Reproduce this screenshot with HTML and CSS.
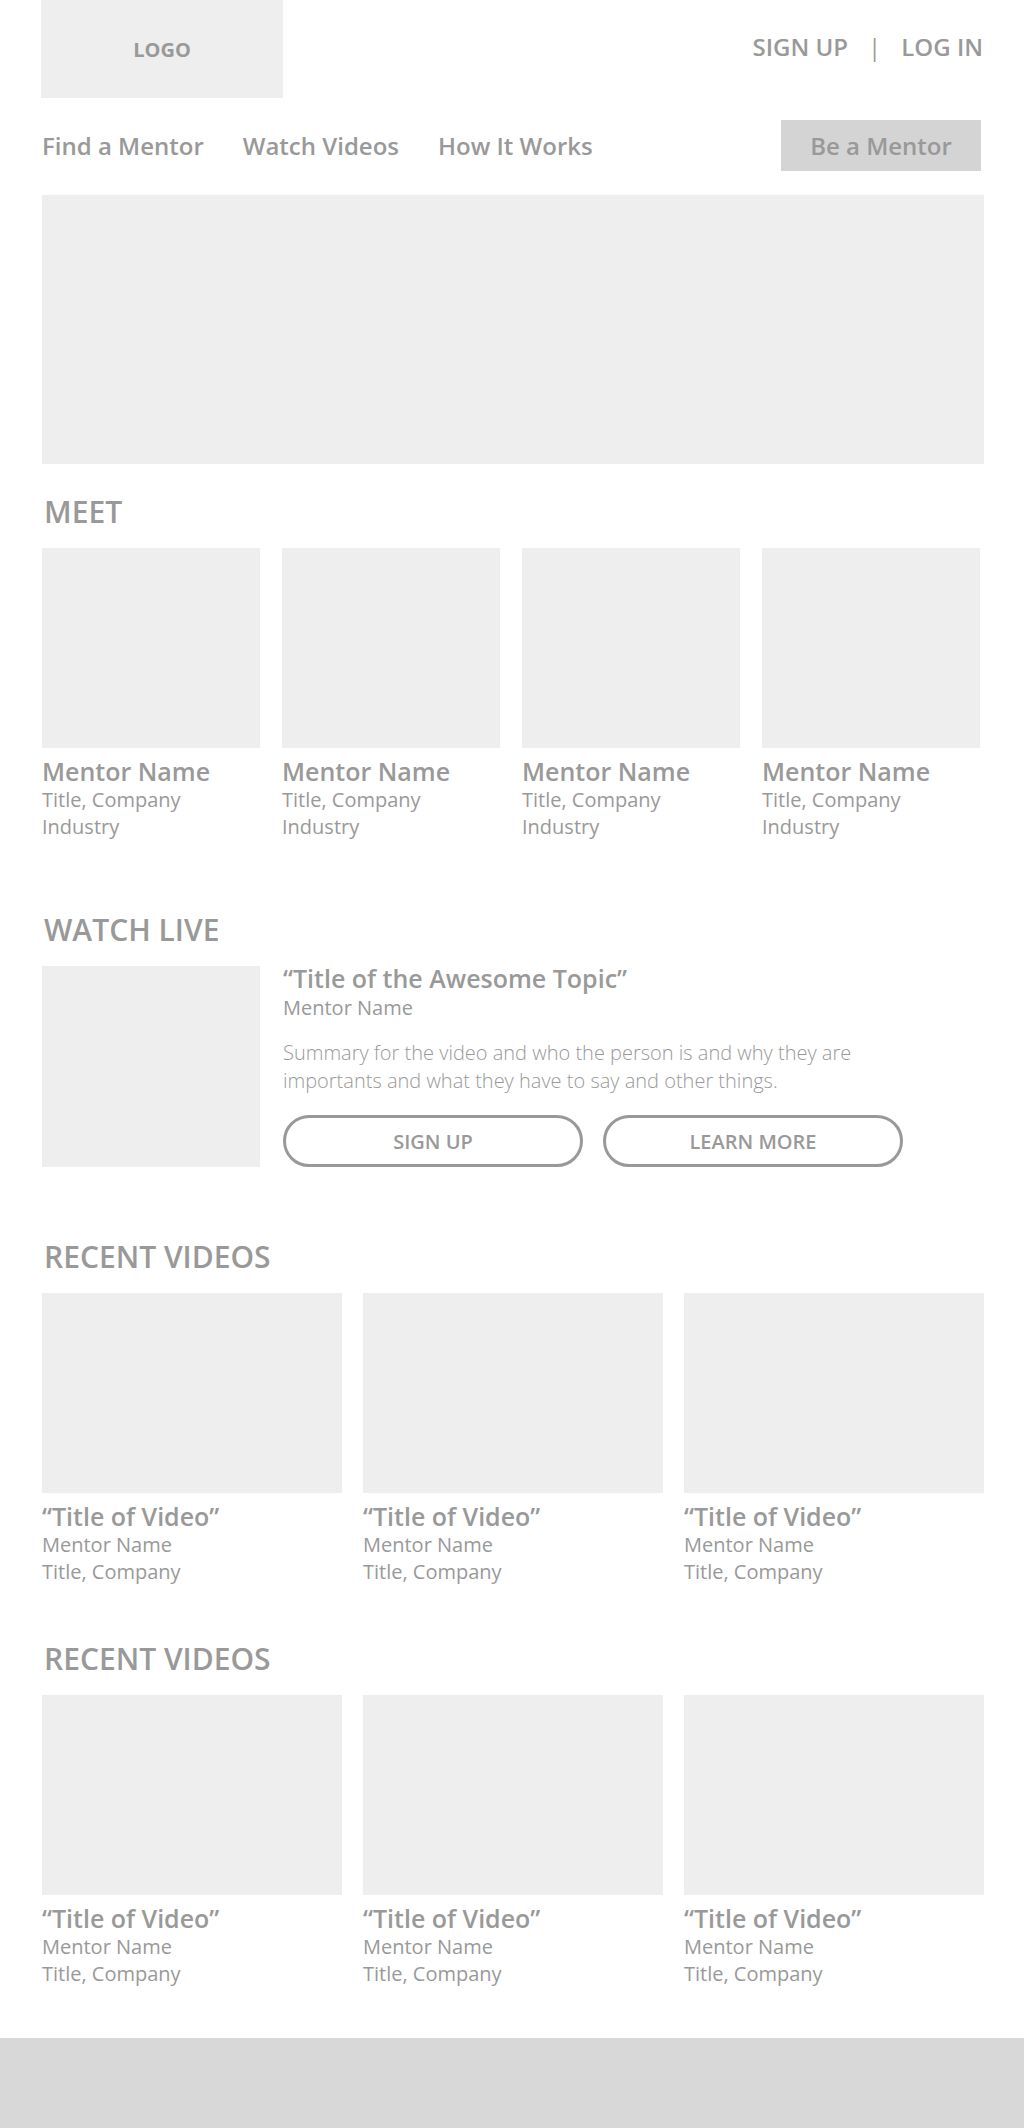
FILE: index.html
```html
<!DOCTYPE html>
<html lang="en">
<head>
<meta charset="utf-8">
<title>Mentor</title>
<link rel="stylesheet" href="styles.css">
</head>
<body>
<div class="page">
  <header class="top">
    <div class="logo">LOGO</div>
    <div class="auth">
      <a href="#">SIGN UP</a>
      <span class="pipe">|</span>
      <a href="#">LOG IN</a>
    </div>
  </header>

  <nav class="nav">
    <div class="links">
      <a href="#">Find a Mentor</a>
      <a href="#">Watch Videos</a>
      <a href="#">How It Works</a>
    </div>
    <a class="cta" href="#">Be a Mentor</a>
  </nav>

  <div class="hero"></div>

  <h2 class="section-title first">MEET</h2>
  <div class="mentors">
    <div class="card">
      <div class="media"></div>
      <div class="card-title">Mentor Name</div>
      <div class="card-sub">Title, Company</div>
      <div class="card-sub">Industry</div>
    </div>
    <div class="card">
      <div class="media"></div>
      <div class="card-title">Mentor Name</div>
      <div class="card-sub">Title, Company</div>
      <div class="card-sub">Industry</div>
    </div>
    <div class="card">
      <div class="media"></div>
      <div class="card-title">Mentor Name</div>
      <div class="card-sub">Title, Company</div>
      <div class="card-sub">Industry</div>
    </div>
    <div class="card">
      <div class="media"></div>
      <div class="card-title">Mentor Name</div>
      <div class="card-sub">Title, Company</div>
      <div class="card-sub">Industry</div>
    </div>
  </div>

  <h2 class="section-title live-title">WATCH LIVE</h2>
  <div class="live">
    <div class="live-media"></div>
    <div class="live-body">
      <div class="live-topic">“Title of the Awesome Topic”</div>
      <div class="live-mentor">Mentor Name</div>
      <p class="live-summary">Summary for the video and who the person is and why they are importants and what they have to say and other things.</p>
      <div class="live-actions">
        <a class="pill" href="#">SIGN UP</a>
        <a class="pill" href="#">LEARN MORE</a>
      </div>
    </div>
  </div>

  <h2 class="section-title recent-1">RECENT VIDEOS</h2>
  <div class="videos">
    <div class="card">
      <div class="media"></div>
      <div class="card-title">“Title of Video”</div>
      <div class="card-sub">Mentor Name</div>
      <div class="card-sub">Title, Company</div>
    </div>
    <div class="card">
      <div class="media"></div>
      <div class="card-title">“Title of Video”</div>
      <div class="card-sub">Mentor Name</div>
      <div class="card-sub">Title, Company</div>
    </div>
    <div class="card">
      <div class="media"></div>
      <div class="card-title">“Title of Video”</div>
      <div class="card-sub">Mentor Name</div>
      <div class="card-sub">Title, Company</div>
    </div>
  </div>

  <h2 class="section-title recent-2">RECENT VIDEOS</h2>
  <div class="videos">
    <div class="card">
      <div class="media"></div>
      <div class="card-title">“Title of Video”</div>
      <div class="card-sub">Mentor Name</div>
      <div class="card-sub">Title, Company</div>
    </div>
    <div class="card">
      <div class="media"></div>
      <div class="card-title">“Title of Video”</div>
      <div class="card-sub">Mentor Name</div>
      <div class="card-sub">Title, Company</div>
    </div>
    <div class="card">
      <div class="media"></div>
      <div class="card-title">“Title of Video”</div>
      <div class="card-sub">Mentor Name</div>
      <div class="card-sub">Title, Company</div>
    </div>
  </div>
</div>
<footer class="footer"></footer>
</body>
</html>
```
FILE: styles.css
```css
* { box-sizing: border-box; }

html, body {
  margin: 0;
  padding: 0;
  background: #ffffff;
}

body {
  font-family: "Open Sans", "Liberation Sans", sans-serif;
  color: #999999;
}

a {
  color: #999999;
  text-decoration: none;
}

.page {
  padding: 0 40px 0 42px;
}

/* Header */
.top {
  display: flex;
  justify-content: space-between;
  align-items: flex-start;
  height: 98px;
}

.logo {
  width: 242px;
  height: 98px;
  margin-left: -1px;
  background: #eeeeee;
  display: flex;
  align-items: center;
  justify-content: center;
  font-size: 20px;
  font-weight: 700;
  color: #999999;
}

.auth {
  display: flex;
  align-items: baseline;
  gap: 20px;
  padding-top: 30px;
  margin-right: 1px;
  font-size: 24px;
  line-height: 33px;
  font-weight: 600;
}

.pipe {
  font-weight: 400;
}

/* Nav */
.nav {
  margin-top: 22px;
  display: flex;
  align-items: center;
  justify-content: space-between;
  height: 51px;
}

.links {
  display: flex;
  gap: 39px;
  font-size: 24px;
  font-weight: 600;
  line-height: 51px;
}

.cta {
  width: 200px;
  height: 51px;
  margin-right: 3px;
  background: #d4d4d4;
  display: flex;
  align-items: center;
  justify-content: center;
  font-size: 24px;
  font-weight: 600;
  line-height: 51px;
}

/* Hero */
.hero {
  margin-top: 24px;
  height: 269px;
  background: #eeeeee;
}

/* Section titles */
.section-title {
  margin: 30px 0 18px;
  padding-left: 2px;
  font-size: 30px;
  line-height: 36px;
  font-weight: 600;
  color: #999999;
}

.live-title { margin-top: 72px; }
.recent-1 { margin-top: 72px; }
.recent-2 { margin-top: 56px; }

/* Cards */
.mentors {
  display: grid;
  grid-template-columns: repeat(4, 218px);
  column-gap: 22px;
}

.videos {
  display: grid;
  grid-template-columns: repeat(3, 300px);
  column-gap: 21px;
}

.media {
  height: 200px;
  background: #eeeeee;
}

.card-title {
  margin-top: 8px;
  font-size: 25px;
  line-height: 30px;
  font-weight: 600;
}

.card-sub {
  font-size: 20px;
  line-height: 27px;
  font-weight: 400;
}

/* Watch live */
.live {
  display: flex;
  gap: 23px;
}

.live-media {
  flex: 0 0 218px;
  height: 201px;
  background: #eeeeee;
}

.live-body {
  display: flex;
  flex-direction: column;
}

.live-topic {
  font-size: 25px;
  line-height: 24px;
  font-weight: 600;
}

.live-mentor {
  margin-top: 5px;
  font-size: 20px;
  line-height: 26px;
  font-weight: 400;
}

.live-summary {
  margin: 18px 0 0;
  max-width: 600px;
  font-size: 20px;
  line-height: 28px;
  font-weight: 300;
}

.live-actions {
  margin-top: 20px;
  display: flex;
  gap: 20px;
}

.pill {
  width: 300px;
  height: 52px;
  border: 3px solid #999999;
  border-radius: 26px;
  display: flex;
  align-items: center;
  justify-content: center;
  font-size: 20px;
  font-weight: 600;
}

/* Footer */
.footer {
  margin-top: 51px;
  height: 90px;
  background: #d8d8d8;
}
```
